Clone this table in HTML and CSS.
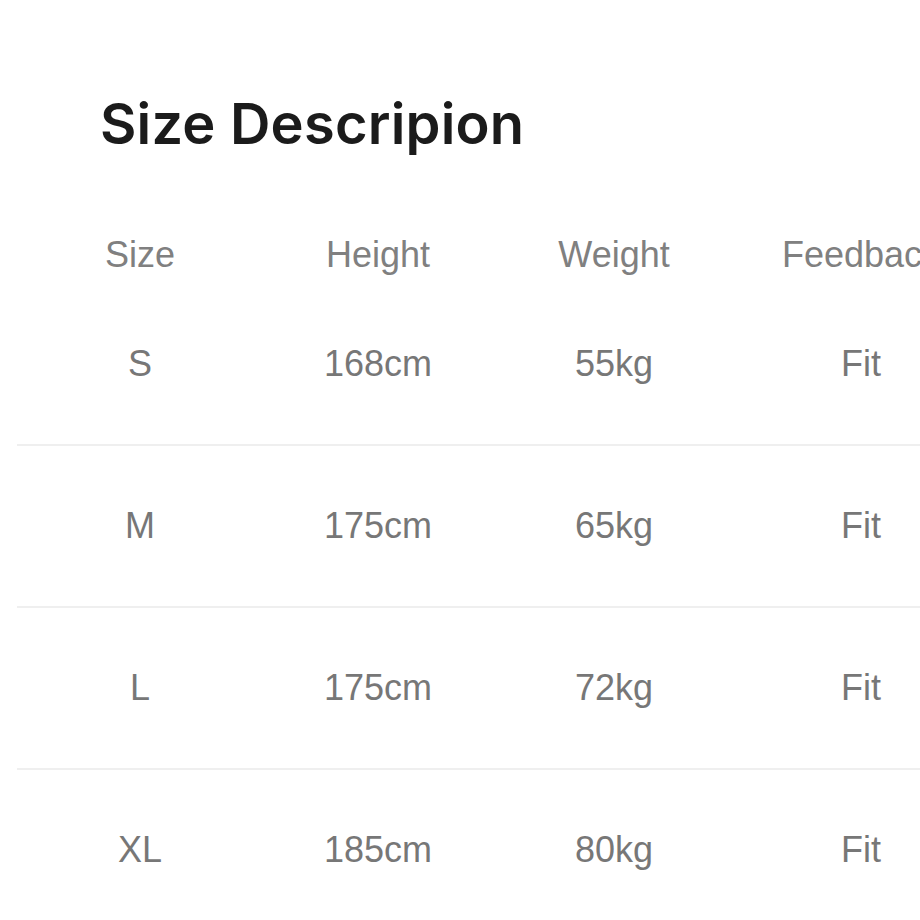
FILE: index.html
```html
<!DOCTYPE html>
<html lang="en">
<head>
    <meta charset="UTF-8">
    <meta name="viewport" content="width=device-width, initial-scale=1.0">
    <title>Size Descripion</title>
    <link rel="stylesheet" href="styles.css">
</head>
<body>
    <div class="container">
        <h1 class="title">Size Descripion</h1>
        <div class="size-table">
            <div class="row head">
                <span>Size</span>
                <span>Height</span>
                <span>Weight</span>
                <span>Feedback</span>
            </div>
            <div class="row">
                <span>S</span>
                <span>168cm</span>
                <span>55kg</span>
                <span>Fit</span>
            </div>
            <div class="row">
                <span>M</span>
                <span>175cm</span>
                <span>65kg</span>
                <span>Fit</span>
            </div>
            <div class="row">
                <span>L</span>
                <span>175cm</span>
                <span>72kg</span>
                <span>Fit</span>
            </div>
            <div class="row last">
                <span>XL</span>
                <span>185cm</span>
                <span>80kg</span>
                <span>Fit</span>
            </div>
        </div>
    </div>
</body>
</html>
```

FILE: styles.css
```css
body {
    margin: 0;
    padding: 0;
    background: #fff;
    font-family: 'Liberation Sans', Arial, sans-serif;
    overflow: hidden;
}
.container {
    padding-top: 96px;
    width: 980px;
}
.title {
    margin: 0 0 73px 100px;
    font-family: 'Inter', 'Liberation Sans', sans-serif;
    font-weight: 600;
    font-size: 56px;
    line-height: 57px;
    color: #1b1b1b;
    letter-spacing: 0.2px;
}
.size-table {
    margin-left: 17px;
}
.row {
    display: grid;
    grid-template-columns: 246px 230px 242px 252px;
    align-items: center;
    height: 160px;
    border-bottom: 2px solid #efefef;
    font-size: 36px;
    color: #777;
}
.row span {
    text-align: center;
    white-space: nowrap;
}
.row.head {
    height: 58px;
    border-bottom: none;
    color: #808080;
}
.row.last {
    border-bottom: none;
}
```
